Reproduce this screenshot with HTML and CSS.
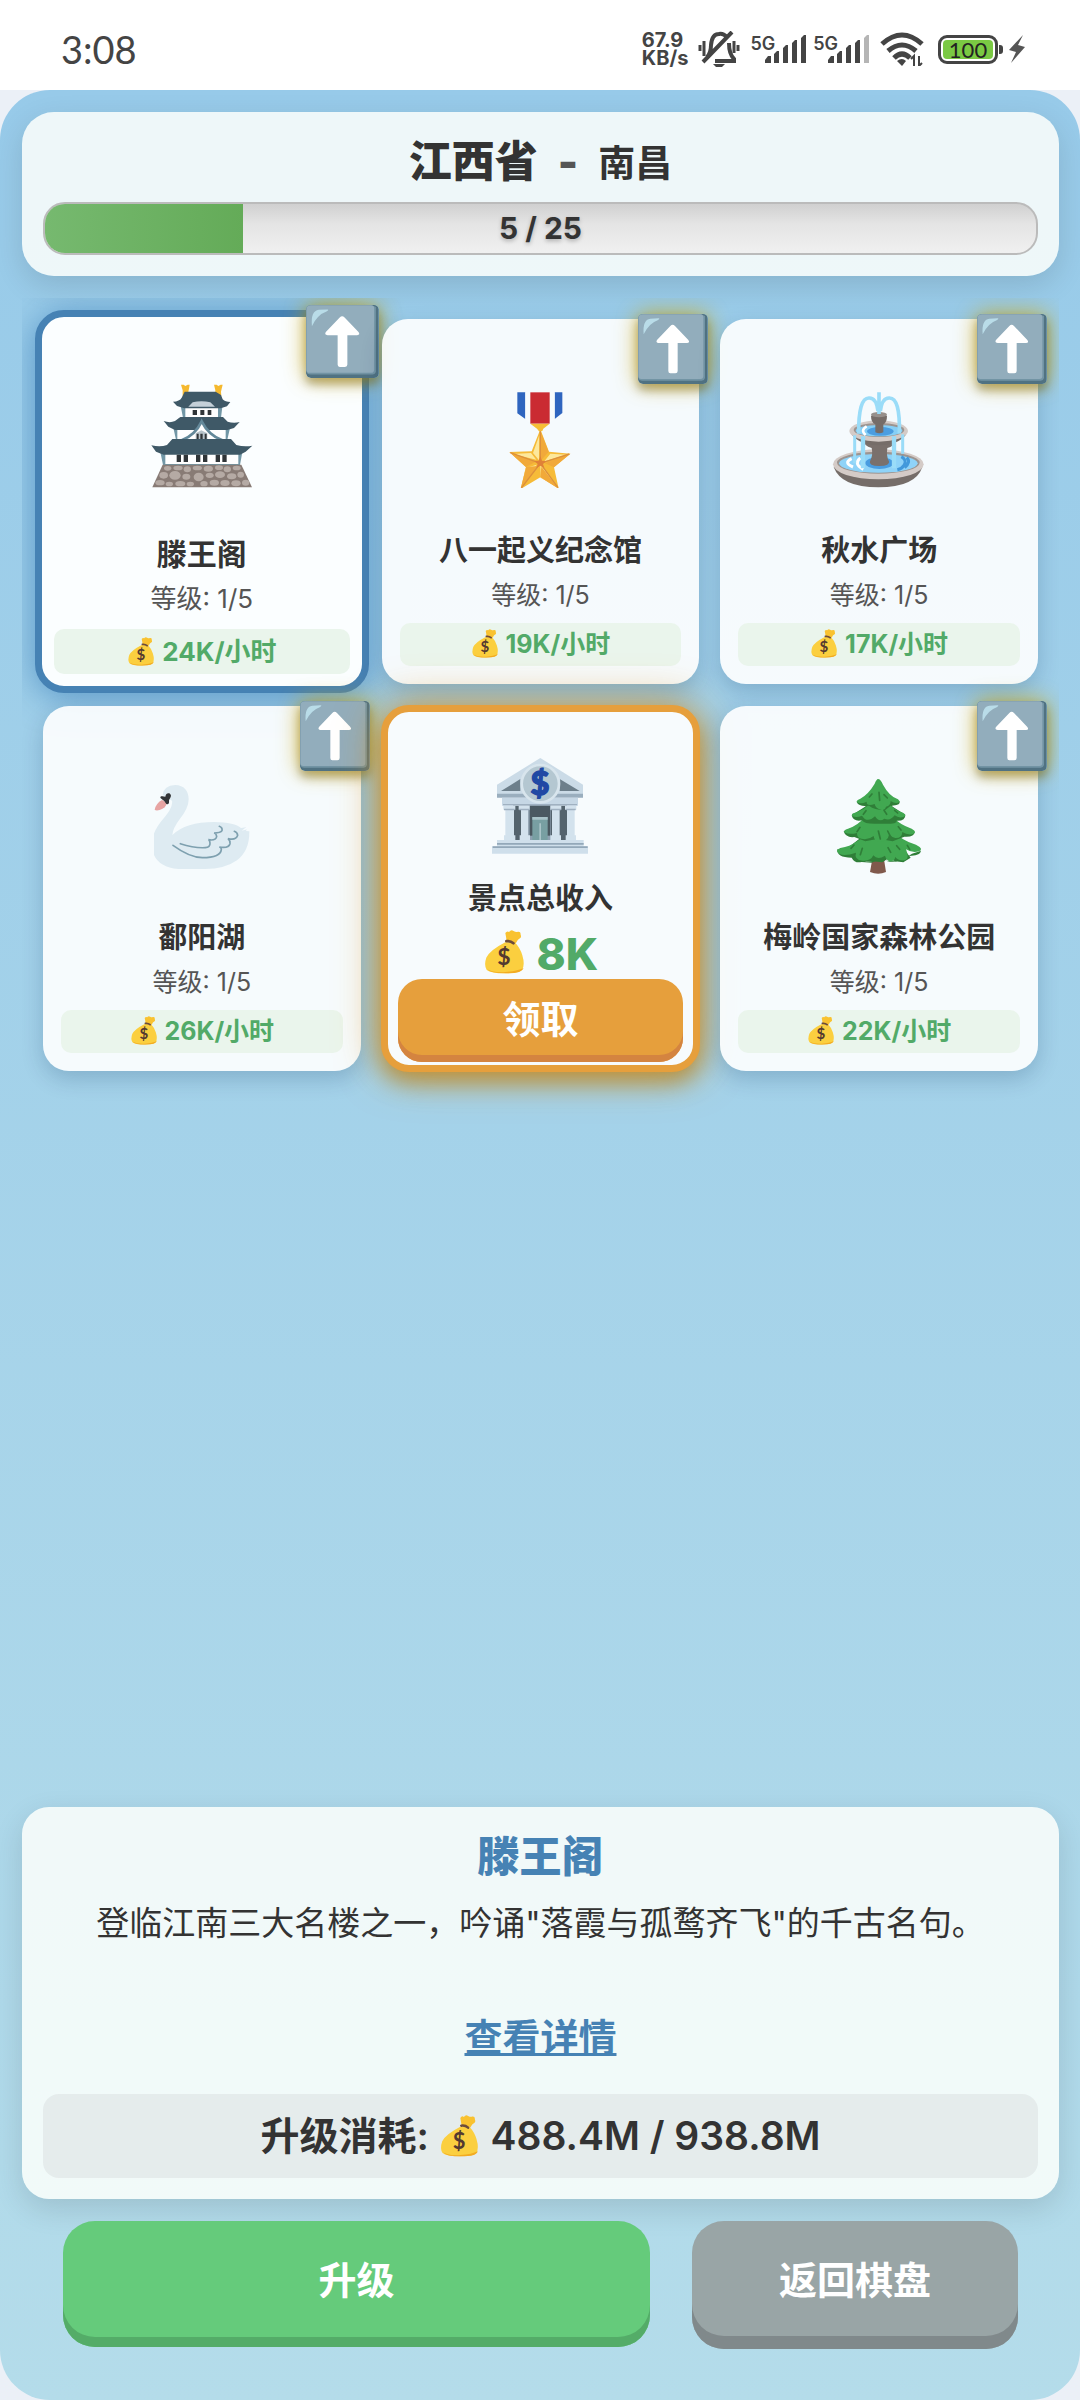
FILE: index.html
```html
<!DOCTYPE html>
<html lang="zh-CN">
<head>
    <meta charset="UTF-8">
    <meta name="viewport" content="width=device-width, initial-scale=1.0">
    <title>江西省 - 南昌</title>
    <link rel="stylesheet" href="styles.css">
</head>
<body>
    <!-- shared icons -->
    <svg class="sprite" aria-hidden="true">
        <symbol id="bag" viewBox="345 760 130 130">
            <path fill="#f9c230" d="M411 769q5-8 11-3q6-8 13-3q8 4 13 2q9-1 8 8q3 8-1 11q-8 4-13 15l-27-5q-2-15-4-25z"/>
            <path fill="#fbcf3f" d="M411 796h28q16 17 22 38q9 30-1 44q-8 10-50 10t-54-10q-9-14-1-37q11-22 56-45z"/>
            <path fill="#f2ab22" d="M357 875q20 12 55 9t53-12q-4 16-51 16t-57-13z"/>
            <path fill="none" stroke="#6d4c3a" stroke-width="8" stroke-linecap="round" d="M414 793q12-2 21 6"/>
            <text x="407" y="864" font-size="68" text-anchor="middle" fill="#543930" font-family="Lato, sans-serif" font-weight="700">$</text>
        </symbol>
        <symbol id="up" viewBox="865 102 210 210">
            <rect x="865" y="102" width="209" height="210" rx="12" fill="#507282"/>
            <path fill="#7294a4" d="M866 294q2 8 12 8h178q8 0 10-8V108l-12-5H876q-9 0-10 10z"/>
            <rect x="866" y="103" width="195" height="194" rx="9" fill="#92adbc"/>
            <path fill="#b9dce8" d="M882 163q-4-44 20-47l25-1q5 1-3 6q-26 9-42 42z"/>
            <path fill="#fff" d="M962 138q7-7 14 0l40 42q6 8-4 9h-28v84q0 7-7 7h-15q-6 0-6-7v-84h-29q-10-1-5-9z"/>
        </symbol>
    </svg>

    <div class="status-bar">
        <span class="time">3:08</span>
        <div class="status-icons">
            <div class="net-speed"><span>67.9</span><span>KB/s</span></div>
            <svg class="bell" viewBox="0 0 42 36" fill="none" stroke="#444" stroke-width="4">
                <path d="M9 26Q13 22 13 14Q14 3 21 3Q25 2 29 6M31 12Q31 23 36 28V30H17M5 31L34 1"/>
                <path d="M2 14v6M6 10v15M36 10v12M40 14v6" stroke-width="3"/>
                <path d="M15 33h12l-3 3h-6z" fill="#444" stroke="none"/>
            </svg>
            <div class="signal">
                <span>5G</span>
                <svg viewBox="0 0 42 28" fill="#444"><path d="M0 28v-3l3-4h3v7zM9 28V19l3-3h2v12zM18 28V13l3-3h2v18zM27 28V8l3-3h2v23zM36 28V3l3-3h2v28z"/></svg>
            </div>
            <div class="signal">
                <span>5G</span>
                <svg viewBox="0 0 42 28" fill="#444"><path d="M0 28v-3l3-4h3v7zM9 28V19l3-3h2v12zM18 28V13l3-3h2v18zM27 28V8l3-3h2v23z"/><path fill="#b5b5b5" d="M36 28V3l3-3h2v28z"/></svg>
            </div>
            <svg class="wifi" viewBox="0 0 44 34" fill="none" stroke="#444" stroke-width="5">
                <path d="M2 12Q22-6 42 12M8 19Q22 7 36 19M14 26Q22 18 30 26"/>
                <path d="M17 29q5-4 9 0l-4 5z" fill="#444" stroke="none"/>
                <path d="M31 27l3-3v10M39 24v10l3-3" stroke-width="2"/>
            </svg>
            <div class="battery"><span>100</span></div>
            <svg class="bolt" viewBox="0 0 18 28" fill="#555"><path d="M15 0L1 15l7 2L3 28l14-16-7-2z"/></svg>
        </div>
    </div>

    <main class="app">
        <header class="panel header">
            <h1><strong>江西省</strong> <span class="dash">-</span> <span class="city">南昌</span></h1>
            <div class="progress" role="progressbar" aria-valuenow="5" aria-valuemax="25">
                <div class="progress-fill" style="width: 20%"></div>
                <span class="progress-text">5 / 25</span>
            </div>
        </header>

        <section class="grid">
            <article class="card selected">
                <svg class="badge"><use href="#up"/></svg>
                <svg class="icon" viewBox="449 309 312 312">
                    <path fill="#f5b92f" d="M542 311h8l5 4 7-4h6l-2 12-2 9 2 14h-19v-18zM641 311h8l5 4 7-4h6l-3 12-2 9 1 14h-18v-18z"/>
                    <path fill="#7297a6" d="M540 370h127l-5 40H548zM519 440h170l-8 36H527zM479 508h248l-8 44H488z"/>
                    <path fill="#fff" d="M555 375h98v34H555zM531 442h145v32H531zM495 508h219v41H495z"/>
                    <path fill="#3f5967" d="M553 332h93l16 10 5 13q8 8 23 8l-10 13-19 6H552l-22-7-12-13q20-1 26-12z"/>
                    <path fill="#c4d0d8" d="M564 377l13-13q26-7 53 0l14 13z"/>
                    <path fill="#3f5967" d="M540 408h128l14 14q18 6 36 1l-17 18-20 6H524l-20-10-14-17q19 7 34 0z"/>
                    <path fill="#fff" stroke="#64899a" stroke-width="8" d="M544 478q41-16 60-57q20 41 62 57z"/>
                    <path fill="#b7c3ca" d="M586 474v-17l17-9 18 9v17z"/>
                    <path fill="#3f5967" d="M516 474h176l16 18q25 7 48 2l-20 18-17 9H490l-23-9-14-19q27 6 47-1z"/>
                    <path fill="#303538" d="M577 387h13v15h-13zM600 387h12v15h-12zM622 387h11v15h-11zM589 458h6v16h-6zM600 458h7v16h-7zM613 458h6v16h-6zM529 521h13v22h-13zM550 521h13v22h-13zM587 521h13v22h-13zM608 521h13v22h-13zM646 521h13v22h-13zM666 521h13v22h-13z"/>
                    <path fill="#887b75" d="M487 551h236l32 68H456z"/>
                    <g fill="#b5aaa4">
                        <ellipse cx="502" cy="562" rx="11" ry="7"/><ellipse cx="533" cy="561" rx="14" ry="7"/><ellipse cx="561" cy="565" rx="11" ry="9"/><ellipse cx="591" cy="561" rx="14" ry="7"/><ellipse cx="624" cy="563" rx="14" ry="9"/><ellipse cx="656" cy="560" rx="12" ry="7"/><ellipse cx="681" cy="565" rx="11" ry="9"/><ellipse cx="709" cy="561" rx="12" ry="7"/>
                        <ellipse cx="490" cy="583" rx="13" ry="10"/><ellipse cx="524" cy="583" rx="17" ry="13"/><ellipse cx="558" cy="587" rx="12" ry="9"/><ellipse cx="595" cy="588" rx="15" ry="13"/><ellipse cx="628" cy="583" rx="12" ry="8"/><ellipse cx="659" cy="581" rx="15" ry="10"/><ellipse cx="694" cy="586" rx="14" ry="9"/><ellipse cx="721" cy="581" rx="10" ry="9"/>
                        <ellipse cx="479" cy="605" rx="14" ry="8"/><ellipse cx="507" cy="609" rx="11" ry="7"/><ellipse cx="540" cy="608" rx="15" ry="8"/><ellipse cx="570" cy="609" rx="11" ry="7"/><ellipse cx="611" cy="608" rx="11" ry="8"/><ellipse cx="642" cy="605" rx="14" ry="9"/><ellipse cx="674" cy="606" rx="14" ry="9"/><ellipse cx="707" cy="607" rx="14" ry="9"/><ellipse cx="736" cy="605" rx="11" ry="9"/>
                    </g>
                </svg>
                <h2>滕王阁</h2>
                <p class="level">等级: 1/5</p>
                <p class="income"><svg class="bag"><use href="#bag"/></svg> 24K/小时</p>
            </article>

            <article class="card">
                <svg class="badge"><use href="#up"/></svg>
                <svg class="icon" viewBox="368 332 288 288">
                    <path fill="#2f65bf" d="M444 333h24v80l-24-17zM556 333h23v62l-23 18z"/>
                    <path fill="#f7fbfd" d="M468 333h15v91l-15-11zM541 333h15v80l-15 11z"/>
                    <path fill="#ca2b32" d="M483 333h58v94h-58z"/>
                    <path fill="#f6be36" d="M483 427h58l-19 15q-2 8-7 8h-6l-6-8z"/>
                    <path fill="#f6bb38" d="M513 444l26 67 64 6-49 41 14 64-55-34-59 35 16-65-50-46 67-2z"/>
                    <path fill="#fde89b" d="M510 462l-19 53 18 22zM430 518l55-3 16 20zM468 561l34-11-43 60zM514 590l-1-40 47 60zM592 520l-49-3-18 23z"/>
                    <path fill="#f1a93a" d="M513 448v92l25-29zM603 517l-76 29 27 12zM568 622l-52-66-3 32zM454 622l52-68-36 3zM420 512l78 30-28 15z"/>
                    <path fill="none" stroke="#dc903c" stroke-width="4" d="M513 450v96L423 514M513 546l87-28M513 546l53 73M513 546l-57 74"/>
                    <path fill="#e08237" d="M513 525l5 13 13 1-10 9 4 12-12-7-12 7 4-12-10-9 13-1z"/>
                </svg>
                <h2>八一起义纪念馆</h2>
                <p class="level">等级: 1/5</p>
                <p class="income"><svg class="bag"><use href="#bag"/></svg> 19K/小时</p>
            </article>

            <article class="card">
                <svg class="badge"><use href="#up"/></svg>
                <svg class="icon" viewBox="426 335 288 288">
                    <path fill="#756d69" d="M434 560h266q-20 61-132 61T434 560z"/>
                    <ellipse cx="568" cy="552" rx="136" ry="45" fill="#d4cbc7"/>
                    <ellipse cx="568" cy="547" rx="124" ry="33" fill="#9c9490"/>
                    <ellipse cx="568" cy="549" rx="118" ry="28" fill="#8fd3f8"/>
                    <path fill="none" stroke="#fff" stroke-width="9" d="M488 535q-26 12 4 25M514 533q-22 17 9 34"/>
                    <path fill="none" stroke="#4299db" stroke-width="9" d="M637 529q18 10 8 26-6 10-20 13M653 532q14 12-6 30"/>
                    <ellipse cx="571" cy="548" rx="42" ry="18" fill="#499ce0"/>
                    <path fill="#7a706c" d="M525 480h95q-4 19-25 23-4 25 5 40 4 14-29 14t-28-14q10-20 5-40-24-5-23-23z"/>
                    <path fill="#766d69" d="M487 462h165q-25 33-82 33t-83-33z"/>
                    <ellipse cx="569" cy="452" rx="88" ry="32" fill="#d4cbc7"/>
                    <ellipse cx="570" cy="449" rx="76" ry="21" fill="#9c9490"/>
                    <ellipse cx="570" cy="451" rx="70" ry="17" fill="#86cff6"/>
                    <path fill="none" stroke="#fff" stroke-width="8" d="M533 438q-20 12-3 26"/>
                    <ellipse cx="574" cy="453" rx="40" ry="13" fill="#4b9de0"/>
                    <path fill="#756c68" d="M546 406h48q0 21-11 26v24q-12 6-24 0v-24q-13-6-13-26z"/>
                    <ellipse cx="570" cy="403" rx="24" ry="8" fill="#968f8b"/>
                    <g fill="none" stroke="#9adcf8" stroke-width="11">
                        <path d="M570 336v65M509 460Q508 352 540 353Q562 352 567 392M631 460Q634 352 601 353Q579 352 574 392"/>
                        <path d="M522 468v96M615 468v96" stroke-width="13"/>
                        <path d="M497 465v84M641 462v58" stroke-width="9"/>
                    </g>
                </svg>
                <h2>秋水广场</h2>
                <p class="level">等级: 1/5</p>
                <p class="income"><svg class="bag"><use href="#bag"/></svg> 17K/小时</p>
            </article>

            <article class="card">
                <svg class="badge"><use href="#up"/></svg>
                <svg class="icon" viewBox="462 294 288 288">
                    <path fill="#deebf2" d="M488 342q3-29 38-30 39 2 40 43 0 26-27 60-20 26-22 47 40-39 126-39 62 1 80 18l20-3-5 12 10 1q1 58-37 87-36 26-96 26h-80q-80-8-79-76 1-38 34-75 30-34 26-54z"/>
                    <path fill="#f7fbfe" d="M725 449l18-14q5 2-1 10z"/>
                    <path fill="#e7a4a3" d="M486 357l15 9q-3 15-22 21-11 3-15-1 4-19 22-29z"/>
                    <path fill="#323437" d="M483 346q7-1 13 1 2-12 12-10 8 5 3 13-5 5-4 15-2 6-8 4-4-9-14-15-7-4-2-8z"/>
                    <path fill="none" stroke="#7ea0af" stroke-width="5" stroke-linecap="round" d="M541 488q42 14 75 12 15-1 14-14-1-9-5-10 22 4 25-9-1-10-8-11 20 0 24-7 2-9-8-13M519 493q49 36 88 37 55 0 57-25 0-5-6-7 28 5 32-10 1-9-6-15 24 6 29-10-1-9-10-12"/>
                </svg>
                <h2>鄱阳湖</h2>
                <p class="level">等级: 1/5</p>
                <p class="income"><svg class="bag"><use href="#bag"/></svg> 26K/小时</p>
            </article>

            <article class="card collect">
                <svg class="icon" viewBox="369 234 288 288">
                    <path fill="#cbdbe7" d="M514 234l128 80v36H384v-36z"/>
                    <path fill="#9aaebe" d="M384 341h258v12H384z"/>
                    <path fill="#6d7f8b" d="M396 333l58-36v36zM632 333l-60-36v36z"/>
                    <path fill="#c6d7e5" d="M399 353h228v24H399z"/>
                    <path fill="#54636d" d="M432 377h162v103H432z"/>
                    <path fill="#8da0b0" d="M478 377h68v103h-68z"/>
                    <path fill="#4b5961" d="M482 377h62v90h-62z"/>
                    <path fill="#789fa2" d="M490 411h46v69h-46z"/><path fill="#a9c3c8" d="M490 411h46v8h-46zM511 430h5v50h-5z"/>
                    <g fill="#d3e2ed"><path d="M403 377h36v12h-4v77h4v14h-34v-14h4v-77h-6zM449 377h33v12h-4v77h5v14h-31v-14h4v-77h-7zM544 377h33v12h-5v77h4v14h-32v-14h5v-77h-5zM588 377h34v12h-5v77h4v14h-31v-14h4v-77h-6z"/></g>
                    <path fill="#a0b1c1" d="M405 386h32v5h-32zM451 386h30v5h-30zM546 386h30v5h-30zM591 386h29v5h-29zM402 372h222v4H402z"/>
                    <path fill="#cfdfeb" d="M384 480h260v19h13v22H369v-22h15z"/>
                    <path fill="#93a8b9" d="M384 489h260v5H384zM371 499h285v5H371z"/>
                    <circle cx="514" cy="311" r="56" fill="#b4c7d1" stroke="#d8e5ed" stroke-width="8"/>
                    <text x="513" y="346" font-size="98" font-weight="900" text-anchor="middle" fill="#2048a4" stroke="#2048a4" stroke-width="4" font-family="Lato, sans-serif">$</text>
                </svg>
                <h2>景点总收入</h2>
                <p class="total"><svg class="bag"><use href="#bag"/></svg> 8K</p>
                <button type="button" class="btn-collect">领取</button>
            </article>

            <article class="card">
                <svg class="badge"><use href="#up"/></svg>
                <svg class="icon" viewBox="426 294 288 288">
                    <path fill="#80594c" d="M550 535h35l6 38q-23 10-48 0z"/>
                    <path fill="#2f7e38" d="M515 470h110l20 35 20 25-22 14-25-3-18-10-20 13-30-3-23 1-24-11-35-9-23-10 30-10zM520 412h96l24 40-60 22-75-6zM530 368h82l-12 40-70-4z"/>
                    <path fill="#2f7e38" d="M445 504l18 12 36 4 32 22 40-4 30 2 40-4 28-18 27-9q-2 14-28 15l-26 4q-10 17-40 14l-30-7-24 10-30-2q-21 5-30-13-46 0-43-26z"/>
                    <path fill="#41a851" d="M502 482q31-18 38-35h74q20 31 67 44 25 13 9 20-20 6-39-6 12 29-4 33-20 2-28-10-3 14-16 13-11-3-15-17-22 14-35-1-8 18-32 16-27-3-20-24-35 12-50 3-15-9 3-17 29-5 48-19z"/>
                    <path fill="#2f7e38" d="M464 451q6 20 32 17l33 13 40-8 42 8 35-14q30 2 31-14l-60-22H510z"/>
                    <path fill="#41a851" d="M525 410h89q18 20 54 33 20 11 1 17-16 2-29-7-1 19-21 18-12-3-18-12-5 24-29 24-17-2-18-18-17 13-37 8-14-3-13-17-23 6-38-2-4-6 11-11 31-11 48-33z"/>
                    <path fill="#2f7e38" d="M488 403q5 20 31 15 8 13 53 10 53 3 51-9 27 1 26-18l-45-28h-69z"/>
                    <path fill="#41a851" d="M537 371h67q12 15 38 24 13 8 1 13-14 4-26-5-13 18-31 10-16 12-28-7-24 22-39-2-18 8-29 1-5-7 8-10 30-10 39-24z"/>
                    <path fill="#2f7e38" d="M503 364q9 15 37 10 18 14 49 13l18-14q28 2 25-12l-59-12z"/>
                    <path fill="#41a851" d="M567 294q8 0 15 17 18 34 45 44 11 10-4 11-10 0-18-6 0 14-14 17-3 10-13 10-19-4-21-18-25 8-24-7-17 8-29 2-5-5 10-11 24-13 43-45 6-14 10-14z"/>
                    <path fill="none" stroke="#2f7e38" stroke-width="5" stroke-linecap="round" d="M570 334l2 24M549 339l-8 9M585 341l10 10M531 389l-8 11M585 388l8 12M617 388l9 8M513 439l-9 13M568 450l6 24M596 450l6 12M628 437l8 10M495 492l-9 10M520 502l-6 19M597 500l8 14M623 494l9 11M655 493l7 12"/>
                </svg>
                <h2>梅岭国家森林公园</h2>
                <p class="level">等级: 1/5</p>
                <p class="income"><svg class="bag"><use href="#bag"/></svg> 22K/小时</p>
            </article>
        </section>

        <section class="panel detail">
            <h3>滕王阁</h3>
            <p class="desc">登临江南三大名楼之一，吟诵"落霞与孤鹜齐飞"的千古名句。</p>
            <a href="#" class="more">查看详情</a>
            <div class="cost">升级消耗: <svg class="bag"><use href="#bag"/></svg> 488.4M / 938.8M</div>
        </section>

        <footer class="actions">
            <button type="button" class="btn-upgrade">升级</button>
            <button type="button" class="btn-back">返回棋盘</button>
        </footer>
    </main>
</body>
</html>
```

FILE: styles.css
```css
* {
    box-sizing: border-box;
}
body {
    margin: 0;
    min-height: 100vh;
    display: flex;
    flex-direction: column;
    background: #ebf0f7;
    color: #333;
    font-family: Inter, "Noto Sans CJK SC", sans-serif;
}
h1, h2, h3, p {
    margin: 0;
}
button {
    font-family: inherit;
    border: none;
    color: #fff;
    cursor: pointer;
}
.sprite {
    display: none;
}

/* status bar */
.status-bar {
    height: 90px;
    padding: 8px 54px 0 61px;
    display: flex;
    align-items: center;
    justify-content: space-between;
    background: #fff;
    color: #444;
}
.time {
    font: 38px Lato, sans-serif;
}
.status-icons {
    display: flex;
    align-items: center;
    gap: 10px;
}
.net-speed {
    display: flex;
    flex-direction: column;
    font-size: 20px;
    line-height: 18px;
    font-weight: 700;
}
.bell {
    width: 42px;
    height: 36px;
}
.signal {
    display: flex;
    align-items: flex-end;
}
.signal + .signal {
    margin-left: -4px;
}
.signal span {
    align-self: flex-start;
    margin-right: -10px;
    font-size: 18px;
    line-height: 18px;
    font-weight: 600;
}
.signal svg {
    width: 42px;
    height: 28px;
}
.wifi {
    width: 44px;
    height: 34px;
}
.battery {
    width: 60px;
    height: 29px;
    margin-left: 4px;
    padding: 2px;
    border: 3px solid #444;
    border-radius: 9px;
    position: relative;
}
.battery::after {
    content: "";
    position: absolute;
    right: -8px;
    top: 7px;
    width: 4px;
    height: 9px;
    border-radius: 0 3px 3px 0;
    background: #444;
}
.battery span {
    display: block;
    border-radius: 4px;
    background: #7ac943;
    color: #222;
    text-align: center;
    font: 22px/19px Lato, sans-serif;
}
.bolt {
    width: 18px;
    height: 28px;
}

/* layout */
.app {
    flex: 1;
    display: flex;
    flex-direction: column;
    gap: 22px;
    padding: 22px 21px 51px 22px;
    border-radius: 50px;
    background: linear-gradient(#97cae9, #b4dcea);
}
.panel {
    padding: 21px;
    background: rgba(253, 255, 252, 0.85);
    border-radius: 32px;
    text-align: center;
    box-shadow: 0 10px 30px rgba(0, 0, 0, 0.12);
}

/* header */
.header h1 {
    display: flex;
    align-items: baseline;
    justify-content: center;
    gap: 20px;
    height: 58px;
    margin-bottom: 11px;
    font-size: 43px;
    line-height: 56px;
}
.header strong {
    font-weight: 900;
}
.dash {
    color: #555;
    font-weight: 900;
}
.city {
    font-size: 37px;
}
.progress {
    position: relative;
    height: 53px;
    border: 2px solid #bbb;
    border-radius: 22px;
    overflow: hidden;
    background: linear-gradient(#d0d0d0, #e4e4e4 40%, #f0f0f0);
}
.progress-fill {
    height: 100%;
    background: linear-gradient(90deg, #76b96f, #64ab58);
}
.progress-text {
    position: absolute;
    inset: 0;
    font-size: 30px;
    line-height: 49px;
    font-weight: 700;
    text-shadow: 0 2px 4px rgba(0, 0, 0, 0.25);
}

/* cards */
.grid {
    flex: 1;
    display: grid;
    grid-template-columns: repeat(3, 1fr);
    grid-auto-rows: 365px;
    gap: 22px 21px;
    align-content: start;
    padding: 21px;
    overflow: hidden;
}
.card {
    position: relative;
    display: flex;
    flex-direction: column;
    align-items: center;
    justify-content: flex-end;
    padding: 18px;
    border-radius: 26px;
    background: rgba(255, 255, 255, 0.9);
    box-shadow: 0 8px 22px rgba(0, 40, 80, 0.2);
}
.icon {
    width: 96px;
    height: 96px;
    margin-bottom: 43px;
}
.card h2 {
    font-size: 29px;
    line-height: 40px;
    margin-bottom: 8px;
    white-space: nowrap;
}
.level {
    margin-bottom: 12px;
    font-size: 25px;
    line-height: 32px;
    color: #555;
}
.bag {
    width: 1em;
    height: 1em;
    vertical-align: -4px;
}
.income {
    width: 100%;
    border-radius: 10px;
    background: #eaf5ec;
    color: #52aa68;
    font-size: 25px;
    line-height: 43px;
    font-weight: 700;
    text-align: center;
}
.income .bag {
    width: 29px;
    height: 29px;
    vertical-align: -5px;
}
.badge {
    position: absolute;
    top: -5px;
    right: -9px;
    width: 70px;
    height: 70px;
    border-radius: 5px;
    box-shadow: 0 0 22px rgba(205, 165, 10, 0.8), 0 6px 10px rgba(60, 50, 0, 0.4);
}
.selected {
    margin: -9px -8px;
    padding: 12px;
    border: 7px solid #4682b4;
    border-radius: 29px;
    background: #fbfeff;
    box-shadow: 0 4px 34px rgba(50, 120, 180, 0.65);
}
.selected .icon {
    width: 104px;
    height: 104px;
    margin-bottom: 46px;
}
.selected h2 {
    font-size: 30px;
    margin-bottom: 9px;
}
.selected .level {
    font-size: 26px;
    margin-bottom: 14px;
}
.selected .income {
    font-size: 26px;
    line-height: 45px;
}
.selected .badge {
    top: -12px;
    right: -17px;
    width: 73px;
    height: 73px;
}
.collect {
    margin: -1px;
    padding: 3px 10px;
    border: 7px solid #e69f3c;
    border-radius: 28px;
    background: #f7fbfd;
    box-shadow: 0 0 44px rgba(230, 145, 20, 0.75), 0 10px 22px rgba(160, 110, 0, 0.6);
}
.collect .icon {
    margin-bottom: 25px;
}
.collect h2 {
    margin-bottom: 10px;
}
.total {
    font-size: 44px;
    line-height: 50px;
    font-weight: 800;
    color: #52aa68;
}
.btn-collect {
    width: 100%;
    height: 83px;
    padding: 0 0 9px;
    border-radius: 24px;
    background: #e69f3c;
    box-shadow: inset 0 -7px #d48440;
    font-size: 38px;
    font-weight: 700;
}

/* detail */
.detail {
    border-radius: 27px;
}
.detail h3 {
    font-size: 42px;
    line-height: 58px;
    font-weight: 900;
    color: #4682b4;
}
.desc {
    margin: 11px 0;
    min-height: 104px;
    font-size: 33px;
    line-height: 52px;
}
.more {
    display: inline-block;
    font-size: 38px;
    line-height: 50px;
    font-weight: 700;
    color: #4682b4;
}
.cost {
    margin-top: 32px;
    padding: 16px;
    border-radius: 16px;
    background: #e5ecec;
    font-size: 39px;
    line-height: 52px;
    font-weight: 600;
}
.cost .bag {
    width: 42px;
    height: 42px;
    vertical-align: -7px;
}

/* buttons */
.actions {
    display: flex;
    align-items: flex-start;
    gap: 42px;
    padding: 0 41px;
}
.actions button {
    border-radius: 32px;
    font-size: 38px;
    font-weight: 700;
}
.btn-upgrade {
    flex: 9;
    height: 126px;
    padding: 0 0 14px;
    background: #65cb7b;
    box-shadow: inset 0 -10px #54ac68;
}
.btn-back {
    flex: 5;
    height: 128px;
    padding: 0 0 16px;
    background: #99a5a6;
    box-shadow: inset 0 -13px #80898b;
}
```
